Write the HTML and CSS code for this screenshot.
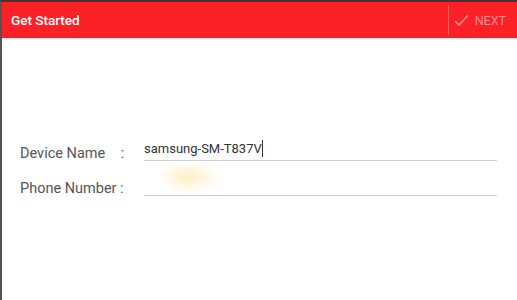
FILE: index.html
```html
<!DOCTYPE html>
<html lang="en">

<head>
    <meta charset="UTF-8">
    <meta name="viewport" content="width=device-width, initial-scale=1.0">
    <title>Get Started</title>
    <link rel="stylesheet" href="styles.css">
</head>

<body>
    <div class="screen">
        <header class="app-bar">
            <h1 class="app-title">Get Started</h1>
            <button class="next-btn" disabled>
                <svg width="15" height="13" viewBox="0 0 15 13">
                    <path d="M1 7.2 L5 11 L14 1.2" fill="none" stroke="currentColor" stroke-width="1.6" />
                </svg>
                NEXT
            </button>
        </header>

        <form class="device-form">
            <div class="form-row">
                <label class="form-label">Device Name <span class="colon">:</span></label>
                <div class="form-field">
                    <span class="field-value">samsung-SM-T837V</span><span class="caret"></span>
                </div>
            </div>
            <div class="form-row">
                <label class="form-label">Phone Number :</label>
                <div class="form-field">
                    <span class="smudge"></span>
                </div>
            </div>
        </form>
    </div>
</body>

</html>
```

FILE: styles.css
```css
html,
body {
    margin: 0;
    padding: 0;
    background: #fff;
}

.screen {
    width: 517px;
    height: 300px;
    box-sizing: border-box;
    border-top: 2px solid #3a3a3a;
    border-left: 2px solid #555;
    font-family: Roboto, "Liberation Sans", sans-serif;
    overflow: hidden;
}

.app-bar {
    height: 36px;
    background: #fb2127;
    display: flex;
    align-items: center;
    justify-content: space-between;
    box-shadow: 0 1px 2px rgba(0, 0, 0, 0.18);
}

.app-title {
    margin: 0 0 0 9px;
    color: #fff;
    font-size: 13.5px;
    font-weight: 500;
}

.next-btn {
    height: 30px;
    display: flex;
    align-items: center;
    gap: 6px;
    padding: 0 11px 0 5px;
    margin: 0;
    border: none;
    border-left: 1px solid #fd5a5e;
    background: transparent;
    color: #fd8d90;
    font-family: Roboto, "Liberation Sans", sans-serif;
    font-size: 12.5px;
}

/* form */

.device-form {
    padding: 87px 0 0 18px;
}

.form-row {
    display: flex;
    align-items: flex-end;
    height: 36px;
}

.form-row + .form-row {
    height: 35px;
}

.form-label {
    width: 124px;
    margin-bottom: -2px;
    color: #555;
    font-size: 14.5px;
    line-height: 18px;
}

.colon {
    margin-left: 12px;
}

.form-field {
    position: relative;
    width: 353px;
    height: 24px;
    display: flex;
    align-items: center;
    border-bottom: 1px solid #cfcfcf;
    color: #333;
    font-size: 13px;
}

.caret {
    display: inline-block;
    width: 1px;
    height: 17px;
    background: #333;
}

.smudge {
    position: absolute;
    left: 10px;
    top: -6px;
    width: 70px;
    height: 30px;
    background: radial-gradient(ellipse at 50% 40%, rgba(255, 225, 150, 0.55), rgba(255, 240, 210, 0) 65%);
}
```
